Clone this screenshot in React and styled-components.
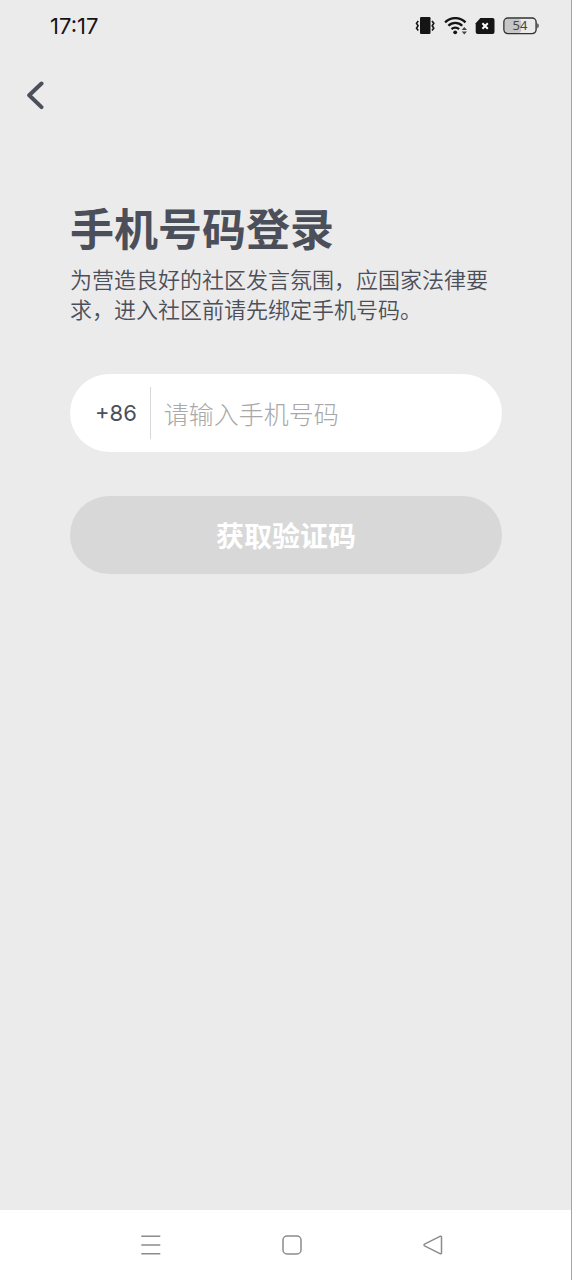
import React, {useState} from 'react';
import styled, {createGlobalStyle} from "styled-components";

const GlobalStyle = createGlobalStyle`
    * {
        box-sizing: border-box;
    }

    body {
        margin: 0;
        background: #ebebeb;
        font-family: "Noto Sans", "Noto Sans CJK SC", sans-serif;
    }

    button, input {
        font-family: inherit;
    }
`

const Screen = styled.div`
    display: flex;
    flex-direction: column;
    min-height: 100vh;
    background: #ebebeb;
    border-right: 1px solid #a6a6a6;
`

const StatusBar = styled.div`
    display: flex;
    align-items: center;
    justify-content: space-between;
    height: 52px;
    padding: 0 32px 0 50px;
    color: #151515;
`

const Clock = styled.time`
    font-family: Inter, "Noto Sans", sans-serif;
    font-size: 22px;
    line-height: 28px;
`

const StatusIcons = styled.div`
    display: flex;
    align-items: center;
    gap: 8px;

    svg {
        display: block;
    }
`

const Header = styled.header`
    display: flex;
    padding: 20px 12px;
`

const IconButton = styled.button`
    display: flex;
    align-items: center;
    justify-content: center;
    width: 48px;
    height: 48px;
    padding: 0;
    border: 0;
    background: none;
    color: ${({ $color }) => $color};
    cursor: pointer;
`

const Content = styled.main`
    flex: 1;
    padding: 58px 69px 40px 70px;
`

const Title = styled.h1`
    margin: 0;
    color: #4b4f5a;
    font-family: "Noto Sans CJK SC", sans-serif;
    font-size: 44px;
    font-weight: 700;
    line-height: 58px;
`

const Description = styled.p`
    margin: 7px 0 0;
    color: #4b4f5a;
    font-family: "Noto Sans CJK SC", sans-serif;
    font-size: 22px;
    font-weight: 350;
    line-height: 30px;
`

const PhoneForm = styled.form`
    display: flex;
    flex-direction: column;
    gap: 44px;
    margin-top: 51px;
`

const PhoneField = styled.div`
    display: flex;
    align-items: center;
    height: 78px;
    padding: 0 26px 0 25px;
    border-radius: 39px;
    background: #fff;
`

const CountryCode = styled.label`
    display: flex;
    align-items: center;
    height: 52px;
    padding-right: 13px;
    border-right: 1px solid #d8d8d8;
    color: #4b4f5a;
    font-family: Inter, "Noto Sans", sans-serif;
    font-size: 22px;
`

const PhoneInput = styled.input`
    flex: 1;
    min-width: 0;
    height: 52px;
    padding: 0 0 0 13px;
    border: 0;
    outline: 0;
    background: none;
    color: #4b4f5a;
    font-family: "Noto Sans CJK SC", sans-serif;
    font-size: 25px;
    font-weight: 300;

    &::placeholder {
        color: #a8a8a8;
        opacity: 1;
    }
`

const SubmitButton = styled.button`
    height: 78px;
    border: 0;
    border-radius: 39px;
    background: ${({ $active }) => ($active ? "#4b4f5a" : "#d8d8d8")};
    color: #fff;
    font-family: "Noto Sans CJK SC", sans-serif;
    font-size: 28px;
    font-weight: 700;
`

const NavBar = styled.nav`
    display: grid;
    grid-template-columns: repeat(3, 1fr);
    justify-items: center;
    align-items: center;
    height: 70px;
    padding: 0 68px 0 80px;
    background: #fff;
`

const VibrateIcon = () => (
    <svg width="20" height="18" viewBox="0 0 20 18" aria-hidden="true">
        <rect x="5" y="0" width="10.5" height="17" rx="1.2" fill="#151515" />
        <path
            d="M3.3 4 1.5 6.3l1.6 2.4-1.6 2.5 1.8 2.3M17 4l1.8 2.3-1.6 2.4 1.6 2.5-1.8 2.3"
            fill="none"
            stroke="#151515"
            strokeWidth="1.6"
        />
    </svg>
)

const WifiIcon = () => (
    <svg width="24" height="18" viewBox="0 0 24 18" aria-hidden="true">
        <g fill="none" stroke="#151515" strokeWidth="2.3">
            <path d="M2.1 5.4a14.2 14.2 0 0 1 20.4 0" />
            <path d="M5.4 8.8a9.6 9.6 0 0 1 13.8 0" />
            <path d="M8.5 12.1a5.4 5.4 0 0 1 7.6 0" />
        </g>
        <circle cx="12.2" cy="15.3" r="1.9" fill="#151515" />
        <path d="M18.7 13 21.3 10l2.7 3zM18.7 14.6h5.3L21.3 17.6z" fill="#444" />
    </svg>
)

const SimIcon = () => (
    <svg width="20" height="17" viewBox="0 0 20 17" aria-hidden="true">
        <path
            d="M5.4 0h12.1a2 2 0 0 1 2 2v12a2 2 0 0 1-2 2H2.7a2 2 0 0 1-2-2V5.2z"
            fill="#151515"
        />
        <path d="m7.4 5.3 5.4 5.4m0-5.4-5.4 5.4" stroke="#fff" strokeWidth="2" />
    </svg>
)

const BatteryIcon = ({ level }) => (
    <svg width="36" height="18" viewBox="0 0 36 18" role="img" aria-label={`${level}%`}>
        <rect x="2" y="2" width={30 * level / 100} height="14" rx="3" fill="#c6c6c6" />
        <rect
            x="0.9"
            y="1"
            width="32.2"
            height="15.6"
            rx="4"
            fill="none"
            stroke="#333"
            strokeWidth="1.4"
        />
        <path d="M34.3 6.3q1.4.4 1.4 2.5t-1.4 2.5z" fill="#333" />
        <text
            x="17"
            y="13.4"
            textAnchor="middle"
            fontFamily="Noto Sans, sans-serif"
            fontSize="13"
            fill="#444"
        >
            {level}
        </text>
    </svg>
)

const BackIcon = () => (
    <svg width="20" height="30" viewBox="0 0 20 30" aria-hidden="true">
        <path
            d="M15.5 2.5 3.2 14.2l12.3 11.9"
            fill="none"
            stroke="currentColor"
            strokeWidth="4"
            strokeLinecap="round"
            strokeLinejoin="round"
        />
    </svg>
)

const NavIcon = ({ children }) => (
    <svg
        width="22"
        height="22"
        viewBox="0 0 22 22"
        fill="none"
        stroke="currentColor"
        strokeWidth="1.5"
        strokeLinejoin="round"
        aria-hidden="true"
    >
        {children}
    </svg>
)

const App = () => {
    const [phone, setPhone] = useState("")

    return (
        <Screen>
            <GlobalStyle />
            <StatusBar>
                <Clock>17:17</Clock>
                <StatusIcons>
                    <VibrateIcon />
                    <WifiIcon />
                    <SimIcon />
                    <BatteryIcon level={54} />
                </StatusIcons>
            </StatusBar>
            <Header>
                <IconButton type="button" $color="#4b4f5a" aria-label="返回">
                    <BackIcon />
                </IconButton>
            </Header>
            <Content>
                <Title>手机号码登录</Title>
                <Description>
                    为营造良好的社区发言氛围，应国家法律要求，进入社区前请先绑定手机号码。
                </Description>
                <PhoneForm onSubmit={(e) => e.preventDefault()}>
                    <PhoneField>
                        <CountryCode htmlFor="phone">+86</CountryCode>
                        <PhoneInput
                            id="phone"
                            type="tel"
                            placeholder="请输入手机号码"
                            value={phone}
                            onChange={(e) => setPhone(e.target.value)}
                        />
                    </PhoneField>
                    <SubmitButton type="submit" $active={phone.length === 11}>
                        获取验证码
                    </SubmitButton>
                </PhoneForm>
            </Content>
            <NavBar>
                <IconButton type="button" $color="#8c8c8c" aria-label="最近任务">
                    <NavIcon>
                        <path d="M1.3 2.2h19M1.3 11h19M1.3 19.7h19" />
                    </NavIcon>
                </IconButton>
                <IconButton type="button" $color="#8c8c8c" aria-label="主屏幕">
                    <NavIcon>
                        <rect x="2" y="2" width="18" height="18" rx="4" />
                    </NavIcon>
                </IconButton>
                <IconButton type="button" $color="#8c8c8c" aria-label="返回上一页">
                    <NavIcon>
                        <path d="M18 2.3 2.5 10.2q-1 .8 0 1.6L18 19.7q1.5.4 1.5-1V3.3q0-1.4-1.5-1z" />
                    </NavIcon>
                </IconButton>
            </NavBar>
        </Screen>
    )
}

export default App;
